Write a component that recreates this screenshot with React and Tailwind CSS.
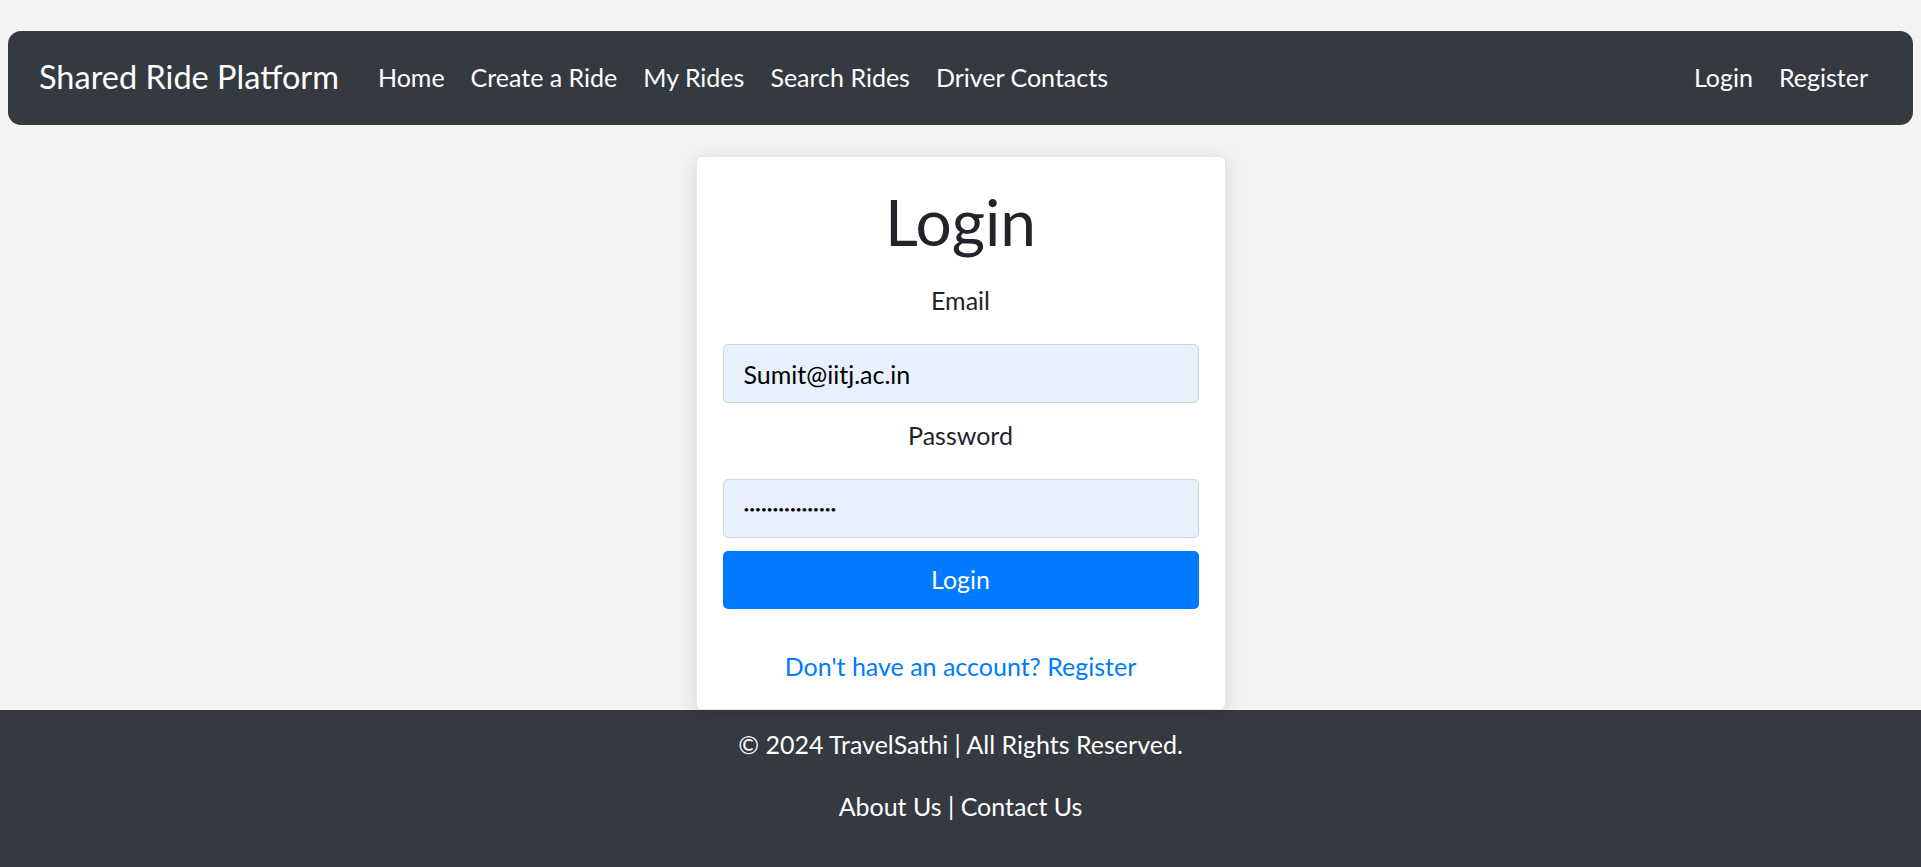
export default function App() {
  const links = ["Home", "Create a Ride", "My Rides", "Search Rides", "Driver Contacts"];

  return (
    <div className="min-h-screen flex flex-col bg-[#f3f3f3] text-[#212529] font-['Lato',sans-serif]">
      {/* barra de navegación */}
      <nav className="mx-2 mt-[31px] h-[94px] flex items-center rounded-[13px] bg-[#343a40] pb-[2px] pl-[31px] pr-[45px] text-white">
        <span className="text-[32.5px] leading-none">Shared Ride Platform</span>
        <ul className="ml-[39px] flex gap-[26px] text-[25px] leading-none">
          {links.map((l) => (
            <li key={l}>{l}</li>
          ))}
        </ul>
        <ul className="ml-auto flex gap-[26px] text-[25px] leading-none">
          <li>Login</li>
          <li>Register</li>
        </ul>
      </nav>

      {/* tarjeta de login */}
      <main className="flex justify-center pt-[31px]">
        <div className="relative z-10 w-[530px] rounded-[6px] border border-[#e5e5e5] bg-white px-[26px] pb-[24px] pt-[26px] shadow-[0_4px_18px_rgba(0,0,0,0.13)]">
          <h1 className="text-center text-[64px] leading-[77px]">Login</h1>
          <label className="mt-[22px] block text-center text-[25px] leading-[37px]">Email</label>
          <input
            type="email"
            defaultValue="Sumit@iitj.ac.in"
            className="mt-[25px] block h-[59px] w-full rounded-[5px] border border-[#cdd4dc] bg-[#e8f0fe] px-[20px] text-[25px] text-black outline-none"
          />
          <label className="mt-[14px] block text-center text-[25px] leading-[37px]">Password</label>
          <input
            type="password"
            defaultValue="password12345678"
            className="mt-[25px] block h-[59px] w-full rounded-[5px] border border-[#cdd4dc] bg-[#e8f0fe] px-[20px] text-[10px] text-black outline-none"
          />
          <button className="mt-[13px] block h-[58px] w-full rounded-[5px] bg-[#007bff] text-[25px] text-white">
            Login
          </button>
          <p className="mt-[39px] text-center text-[25px] leading-[37px] text-[#007bff]">
            Don't have an account? Register
          </p>
        </div>
      </main>

      {/* pie de página */}
      <footer className="bg-[#343a40] pb-[17px] pt-[16px] text-center text-[25px] leading-[37px] text-white">
        <p className="mb-[25px]">© 2024 TravelSathi | All Rights Reserved.</p>
        <p className="mb-[25px]">About Us | Contact Us</p>
      </footer>
    </div>
  );
}
